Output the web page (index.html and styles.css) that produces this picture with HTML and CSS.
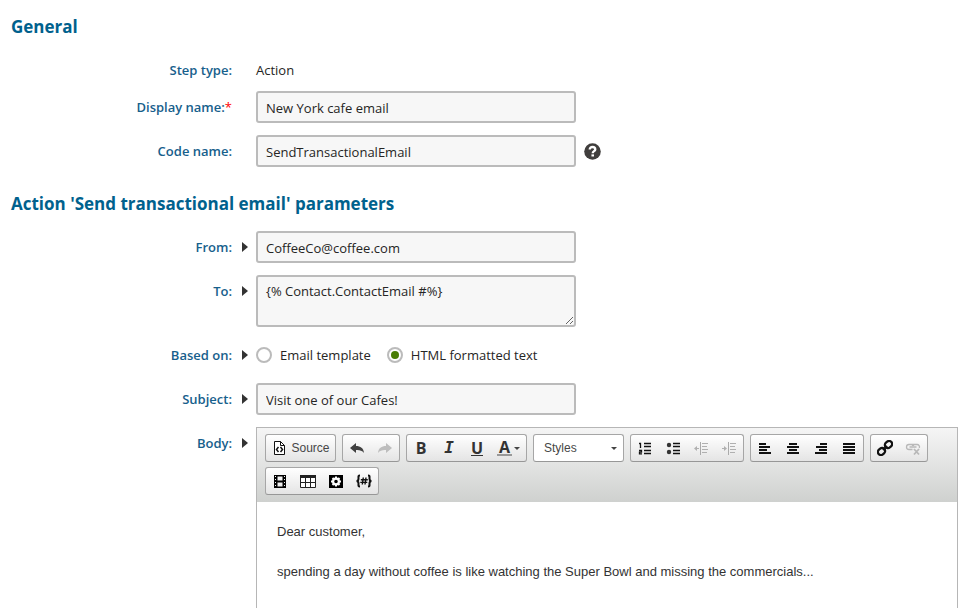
FILE: index.html
```html
<!DOCTYPE html>
<html lang="en">
<head>
<meta charset="utf-8">
<title>Step properties</title>
<link rel="stylesheet" href="styles.css">
</head>
<body>
<form class="page">
  <h2 class="heading">General</h2>
  <div class="row row-static">
    <span class="label">Step type:</span>
    <span class="value">Action</span>
  </div>
  <div class="row">
    <label class="label" for="display-name">Display name:<span class="required">*</span></label>
    <div class="value"><input class="field" id="display-name" type="text" value="New York cafe email"></div>
  </div>
  <div class="row">
    <label class="label" for="code-name">Code name:</label>
    <div class="value">
      <input class="field" id="code-name" type="text" value="SendTransactionalEmail">
      <button class="help" type="button" aria-label="Help">
        <svg width="17" height="17" viewBox="0 0 16 16"><circle cx="8" cy="8" r="7.800" fill="#403e3d"/><path d="M5.400 6.200C5.400 4.500 6.500 3.800 8 3.800s2.600.8 2.600 2.200C10.600 7.700 8.200 7.700 8.200 9.600" fill="none" stroke="#fff" stroke-width="2.200"/><path d="M7 10.700h2.400v2H7z" fill="#fff"/></svg>
      </button>
    </div>
  </div>

  <h2 class="heading">Action 'Send transactional email' parameters</h2>
  <div class="row">
    <label class="label" for="from">From:</label>
    <button class="expand" type="button" aria-label="Edit From value"></button>
    <div class="value"><input class="field" id="from" type="text" value="CoffeeCo@coffee.com"></div>
  </div>
  <div class="row">
    <label class="label" for="to">To:</label>
    <button class="expand" type="button" aria-label="Edit To value"></button>
    <div class="value"><textarea class="field area" id="to">{% Contact.ContactEmail #%}</textarea></div>
  </div>
  <div class="row" role="radiogroup" aria-labelledby="based-on">
    <span class="label" id="based-on">Based on:</span>
    <button class="expand" type="button" aria-label="Edit Based on value"></button>
    <div class="value options">
      <label class="option"><input class="radio" type="radio" name="based">Email template</label>
      <label class="option"><input class="radio" type="radio" name="based" checked>HTML formatted text</label>
    </div>
  </div>
  <div class="row">
    <label class="label" for="subject">Subject:</label>
    <button class="expand" type="button" aria-label="Edit Subject value"></button>
    <div class="value"><input class="field" id="subject" type="text" value="Visit one of our Cafes!"></div>
  </div>
  <div class="row row-fill">
    <span class="label" id="body-label">Body:</span>
    <button class="expand" type="button" aria-label="Edit Body value"></button>
    <div class="editor">
      <div class="toolbar" role="toolbar">
        <div class="group">
          <button class="tool source" type="button"><svg width="16" height="16" viewBox="0 0 16 16"><path d="M3.500 1.500h6l4 4v9h-10z" fill="#fff" stroke="#111"/><path d="M9.500 1.500v4h4" fill="none" stroke="#111"/><path d="M7.500 7L5.500 9.500l2 2.500M9.500 7l2 2.500-2 2.500" fill="none" stroke="#111" stroke-width="1.500"/></svg>Source</button>
        </div>
        <div class="group">
          <button class="tool" type="button" aria-label="Undo"><svg width="16" height="16" viewBox="0 0 16 16"><path d="M1 8l6-5v3c4.500 0 7.500 2 8 7-2-2.600-4.500-3.200-8-3v3z" fill="#404040"/></svg></button>
          <button class="tool" type="button" aria-label="Redo" disabled><svg width="16" height="16" viewBox="0 0 16 16"><path d="M15 8L9 3v3c-4.500 0-7.500 2-8 7 2-2.600 4.500-3.200 8-3v3z" fill="#bdbdbd"/></svg></button>
        </div>
        <div class="group">
          <button class="tool letter" type="button" aria-label="Bold">B</button>
          <button class="tool letter italic" type="button" aria-label="Italic">I</button>
          <button class="tool letter" type="button" aria-label="Underline"><span class="underline">U</span></button>
          <button class="tool letter color" type="button" aria-label="Text colour"><span class="swatch">A</span><span class="caret"></span></button>
        </div>
        <div class="styles-box">
          <select class="styles" aria-label="Styles"><option>Styles</option></select>
          <span class="caret"></span>
        </div>
        <div class="group">
          <button class="tool" type="button" aria-label="Numbered list"><svg width="16" height="16" viewBox="0 0 16 16"><path d="M7 3.500h7M7 6.500h7M7 10.500h7M7 13.500h7" stroke="#111" stroke-width="1.300"/><path d="M2 3.500h1.500V8M2 10.500h2.500v1.700H2.500v1.600H5" fill="none" stroke="#111" stroke-width="1.300"/></svg></button>
          <button class="tool" type="button" aria-label="Bulleted list"><svg width="16" height="16" viewBox="0 0 16 16"><path d="M8 3.500h7M8 6.500h7M8 10.500h7M8 13.500h7" stroke="#111" stroke-width="1.300"/><circle cx="4" cy="5" r="2.200" fill="#333"/><circle cx="4" cy="12" r="2.200" fill="#333"/></svg></button>
          <button class="tool" type="button" aria-label="Decrease indent" disabled><svg width="16" height="16" viewBox="0 0 16 16"><path d="M9 3.500h6M9 6.500h5M9 9.500h6M9 12.500h5M2 8.500h4" stroke="#b0b0b0"/><path d="M7.500 2v13" stroke="#aaa"/><path d="M1 8.500L4 6v5z" fill="#b0b0b0"/></svg></button>
          <button class="tool" type="button" aria-label="Increase indent" disabled><svg width="16" height="16" viewBox="0 0 16 16"><path d="M9 3.500h6M9 6.500h5M9 9.500h6M9 12.500h5M1 8.500h4" stroke="#b0b0b0"/><path d="M7.500 2v13" stroke="#aaa"/><path d="M6 8.500L3 6v5z" fill="#b0b0b0"/></svg></button>
        </div>
        <div class="group">
          <button class="tool" type="button" aria-label="Align left"><svg width="16" height="16" viewBox="0 0 16 16"><path d="M2 4h7M2 7h11M2 10h8M2 13h12" stroke="#111" stroke-width="2"/></svg></button>
          <button class="tool" type="button" aria-label="Centre"><svg width="16" height="16" viewBox="0 0 16 16"><path d="M4 4h8M2 7h12M4 10h8M2 13h12" stroke="#111" stroke-width="2"/></svg></button>
          <button class="tool" type="button" aria-label="Align right"><svg width="16" height="16" viewBox="0 0 16 16"><path d="M7 4h7M3 7h11M6 10h8M2 13h12" stroke="#111" stroke-width="2"/></svg></button>
          <button class="tool" type="button" aria-label="Justify"><svg width="16" height="16" viewBox="0 0 16 16"><path d="M2 4h12M2 7h12M2 10h12M2 13h12" stroke="#111" stroke-width="2"/></svg></button>
        </div>
        <div class="group">
          <button class="tool" type="button" aria-label="Link"><svg width="16" height="16" viewBox="0 0 16 16"><g fill="none" stroke="#111" stroke-width="2.300"><rect x="-3.800" y="-3" width="7.600" height="6" rx="3" transform="translate(11.500 4.500) rotate(-40)"/><rect x="-3.800" y="-3" width="7.600" height="6" rx="3" transform="translate(4.500 11.500) rotate(-40)"/><path d="M6 10l4-4"/></g></svg></button>
          <button class="tool" type="button" aria-label="Unlink" disabled><svg width="16" height="16" viewBox="0 0 16 16"><g fill="none" stroke="#b8b8b8" stroke-width="1.300"><path d="M7.500 9.500H4a2.500 2.500 0 0 1 0-5h3.500V6M8.500 6V4.500H12a2.500 2.500 0 0 1 2.300 3.500M4.500 7h7"/><path d="M9 9l5 5.500M14 9l-5 5.500" stroke-width="1.800"/></g></svg></button>
        </div>
        <div class="group">
          <button class="tool" type="button" aria-label="Insert media"><svg width="16" height="16" viewBox="0 0 16 16"><path fill="#000" fill-rule="evenodd" d="M2 2h12v13H2zM5.500 3.500v4h5v-4zM5.500 9.500v4h5v-4zM3 3v1h1V3zM3 6v1h1V6zM3 9v1h1V9zM3 12v1h1v-1zM12 3v1h1V3zM12 6v1h1V6zM12 9v1h1V9zM12 12v1h1v-1z"/></svg></button>
          <button class="tool" type="button" aria-label="Table"><svg width="16" height="16" viewBox="0 0 16 16"><path d="M.5 2.500h15v12H.5z" fill="#fff" stroke="#222"/><path d="M0 2h16v3H0z" fill="#222"/><path d="M5.500 5v9M10.500 5v9M0 9.500h16" stroke="#222"/></svg></button>
          <button class="tool" type="button" aria-label="Widget"><svg width="16" height="16" viewBox="0 0 16 16"><path d="M1 2h14v13H1z" fill="#000"/><circle cx="8" cy="8.500" r="2.900" fill="none" stroke="#fff" stroke-width="2.200"/><path d="M8 3.500v2M8 11.500v2M3 8.500h2M11 8.500h2M4.500 5l1.300 1.300M10.200 10.700l1.300 1.300M4.500 12l1.300-1.300M10.200 6.300L11.500 5" stroke="#fff" stroke-width="2"/></svg></button>
          <button class="tool" type="button" aria-label="Insert macro"><svg width="16" height="16" viewBox="0 0 16 16"><path d="M4 2.500c-2 0-1.500 1-1.500 3 0 1.800-.5 2.500-2 2.500 1.500 0 2 .7 2 2.500 0 2-.5 3 1.500 3M12 2.500c2 0 1.500 1 1.500 3 0 1.800.5 2.500 2 2.500-1.500 0-2 .7-2 2.500 0 2 .5 3-1.500 3" fill="none" stroke="#111" stroke-width="2"/><path d="M7.300 4.500l-1 7M10 4.500l-1 7M4.800 6.700h7M4.300 9.400h7" stroke="#111" stroke-width="1.400"/></svg></button>
        </div>
      </div>
      <div class="content" contenteditable="true" role="textbox" aria-labelledby="body-label">
        <p>Dear customer,</p>
        <p>spending a day without coffee is like watching the Super Bowl and missing the commercials...</p>
      </div>
    </div>
  </div>
</form>
</body>
</html>
```
FILE: styles.css
```css
* { box-sizing: border-box; }

body {
  margin: 0;
  background: #fff;
  color: #262524;
  font: 13px/18px "Open Sans", "Noto Sans", sans-serif;
}

button, input, textarea, select { font: inherit; color: inherit; margin: 0; }

button { padding: 0; border: 0; background: none; }

.page {
  display: flex;
  flex-direction: column;
  min-height: 100vh;
  padding: 15px 10px 0 11px;
}

.heading {
  margin: 0 0 15px;
  color: #00618d;
  font-size: 17px;
  font-weight: 700;
  line-height: 24px;
}

.row + .heading { margin-top: 13px; }

.row {
  display: grid;
  grid-template-columns: 221px 24px minmax(0, 1fr);
  align-items: start;
  margin-bottom: 12px;
}

.row-static { padding-top: 7px; }
.row-static .label, .row-static .value { min-height: 18px; line-height: 18px; }

.row-fill {
  flex: 1;
  align-items: stretch;
  margin-bottom: 0;
}

.label {
  grid-column: 1;
  color: #17608c;
  font-weight: 600;
  line-height: 32px;
  text-align: right;
}

.required { color: #f00; font-weight: 400; }

.expand {
  grid-column: 2;
  display: flex;
  align-items: center;
  height: 32px;
  padding-left: 10px;
}

.expand::before {
  content: "";
  border: solid transparent;
  border-width: 5px 0 5px 6px;
  border-left-color: #333;
}

.value {
  grid-column: 3;
  display: flex;
  align-items: center;
}

.field {
  width: 100%;
  max-width: 320px;
  height: 32px;
  padding: 2px 8px 0;
  border: 2px solid #bbb;
  border-radius: 3px;
  background: #f7f7f7;
}

.area {
  display: block;
  height: 52px;
  padding-top: 5px;
  resize: both;
}

.help { display: flex; margin-left: 8px; }

.options { height: 32px; gap: 16px; }

.option { display: flex; align-items: center; gap: 8px; }

.radio {
  display: grid;
  place-items: center;
  width: 16px;
  height: 16px;
  border: 2px solid #bbb;
  border-radius: 50%;
  background: #fff;
  appearance: none;
}

.radio:checked::before {
  content: "";
  width: 8px;
  height: 8px;
  border-radius: 50%;
  background: #497d04;
}

.editor {
  grid-column: 3;
  display: flex;
  flex-direction: column;
  border: 1px solid #b6b6b6;
  border-bottom: 0;
  font-family: "Liberation Sans", Arial, sans-serif;
}

.toolbar {
  display: flex;
  flex-wrap: wrap;
  gap: 5px 6px;
  padding: 6px 8px 7px;
  background: linear-gradient(#f5f5f5, #cfd1cf);
}

.group, .styles {
  height: 28px;
  border: 1px solid #a6a6a6;
  border-bottom-color: #979797;
  border-radius: 3px;
}

.group {
  display: flex;
  background: linear-gradient(#fff, #e4e4e4);
}

.tool {
  display: flex;
  align-items: center;
  justify-content: center;
  width: 28px;
  height: 26px;
}

.source {
  gap: 4px;
  width: 69px;
  color: #474747;
  font-size: 12px;
}

.letter {
  color: #333;
  font: 700 16px/16px "Open Sans", sans-serif;
}

.italic { font-family: "DejaVu Sans Mono", monospace; font-style: italic; }

.underline { border-bottom: 1px solid #333; line-height: 14px; }

.color { gap: 2px; width: 35px; }

.swatch {
  width: 15px;
  border-bottom: 2px solid #999;
  line-height: 14px;
}

.caret {
  border: solid transparent;
  border-width: 3px 3px 0;
  border-top-color: #444;
}

.styles-box { display: grid; align-items: center; }

.styles-box > * { grid-area: 1 / 1; }

.styles-box .caret {
  justify-self: end;
  margin-right: 7px;
  pointer-events: none;
}

.styles {
  width: 91px;
  padding: 0 10px;
  background: #fff;
  color: #474747;
  font-size: 12px;
  appearance: none;
}

.content {
  flex: 1;
  padding: 20px;
  color: #333;
  line-height: 20px;
  outline: 0;
}

.content p { margin: 0 0 20px; }
```
